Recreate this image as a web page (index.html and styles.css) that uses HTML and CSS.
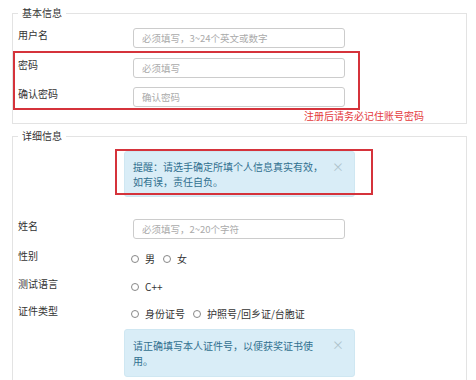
FILE: index.html
```html
<!DOCTYPE html>
<html lang="zh-CN">
<head>
  <meta charset="UTF-8">
  <meta name="viewport" content="width=device-width, initial-scale=1.0">
  <title>选手注册</title>
  <link rel="stylesheet" href="styles.css">
</head>
<body>
  <!-- 基本信息 -->
  <fieldset class="group">
    <legend>基本信息</legend>
    <div class="field">
      <label class="field-label">用户名</label>
      <input class="text-input" type="text" placeholder="必须填写，3~24个英文或数字">
    </div>
    <div class="mark-box">
      <div class="field">
        <label class="field-label">密码</label>
        <input class="text-input" type="password" placeholder="必须填写">
      </div>
      <div class="field">
        <label class="field-label">确认密码</label>
        <input class="text-input" type="password" placeholder="确认密码">
      </div>
    </div>
    <p class="mark-note">注册后请务必记住账号密码</p>
  </fieldset>

  <!-- 详细信息 -->
  <fieldset class="group group-detail">
    <legend>详细信息</legend>
    <div class="notice-wrap">
      <div class="notice">提醒：请选手确定所填个人信息真实有效，<br>如有误，责任自负。</div>
      <span class="notice-close">×</span>
      <div class="mark-outline"></div>
    </div>

    <div class="field field-name">
      <label class="field-label">姓名</label>
      <input class="text-input" type="text" placeholder="必须填写，2~20个字符">
    </div>

    <div class="field field-radio">
      <label class="field-label">性别</label>
      <div class="radio-group">
        <label class="radio-item"><input type="radio" name="sex">男</label>
        <label class="radio-item"><input type="radio" name="sex">女</label>
      </div>
    </div>

    <div class="field field-radio">
      <label class="field-label">测试语言</label>
      <div class="radio-group">
        <label class="radio-item"><input type="radio" name="lang">C++</label>
      </div>
    </div>

    <div class="field field-radio">
      <label class="field-label">证件类型</label>
      <div class="radio-group">
        <label class="radio-item"><input type="radio" name="idtype">身份证号</label>
        <label class="radio-item"><input type="radio" name="idtype">护照号/回乡证/台胞证</label>
      </div>
    </div>

    <div class="notice-wrap notice-id">
      <div class="notice">请正确填写本人证件号，以便获奖证书使<br>用。</div>
      <span class="notice-close">×</span>
    </div>
  </fieldset>
</body>
</html>
```

FILE: styles.css
```css
body {
  margin: 0;
  padding: 7px 9px 0 12px;
  font-family: "Noto Sans CJK SC", sans-serif;
  font-size: 10px;
  color: #333;
  background-color: #fff;
}

.group {
  margin: 0;
  padding: 9px 5px 1px;
  border: 1px solid #e3e3e3;
  min-width: 0;
}

.group legend {
  padding: 0 4px;
  line-height: 12px;
  font-size: 10px;
  color: #333;
}

.group-detail {
  margin-top: 6px;
  padding-bottom: 20px;
}

.field {
  display: flex;
  align-items: flex-start;
}

.field-label {
  flex: none;
  width: 115px;
  padding-top: 1px;
  line-height: 12px;
}

.text-input {
  box-sizing: border-box;
  width: 212px;
  height: 20px;
  margin: 0;
  padding: 0 8px;
  border: 1px solid #ccc;
  border-radius: 3px;
  font-family: "Noto Sans CJK SC", sans-serif;
  font-size: 9.5px;
  color: #555;
}

.text-input::placeholder {
  color: #aaa;
}

/* 红框标注 */
.mark-box {
  box-sizing: border-box;
  width: 347px;
  margin: 3px 0 0 -5px;
  padding: 5px 0 1px 3px;
  border: 2px solid #d5333b;
}

.mark-box .field + .field {
  margin-top: 9px;
}

.mark-note {
  margin: 0;
  padding-left: 286px;
  line-height: 12px;
  color: #e4393c;
}

.mark-outline {
  position: absolute;
  left: -9px;
  top: -2px;
  box-sizing: border-box;
  width: 258px;
  height: 46px;
  border: 2px solid #d5333b;
  pointer-events: none;
}

/* 提示框 */
.notice-wrap {
  position: relative;
  width: 231px;
  margin-left: 106px;
}

.notice {
  padding: 7px 25px 7px 8px;
  border: 1px solid #cfe7f2;
  border-radius: 3px;
  background-color: #d9edf7;
  color: #31708f;
  line-height: 15px;
}

.notice-close {
  position: absolute;
  top: 8px;
  right: 11px;
  line-height: 15px;
  font-size: 12px;
  color: #aec3cc;
}

.notice-id {
  margin-top: 8px;
}

.notice-id .notice {
  padding-top: 8px;
  padding-bottom: 8px;
}

.field-name {
  margin-top: 22px;
}

.field-radio {
  height: 17px;
  margin-top: 10.5px;
}

.field-name + .field-radio {
  margin-top: 10px;
}

.radio-group {
  display: flex;
  align-items: center;
  margin-left: -2px;
  padding-top: 3px;
  line-height: 14px;
}

.radio-item {
  display: inline-flex;
  align-items: center;
  margin-right: 8px;
}

.radio-item input {
  appearance: none;
  box-sizing: border-box;
  width: 8px;
  height: 8px;
  margin: 0 6px 0 0;
  border: 1px solid #888;
  border-radius: 50%;
}
```
